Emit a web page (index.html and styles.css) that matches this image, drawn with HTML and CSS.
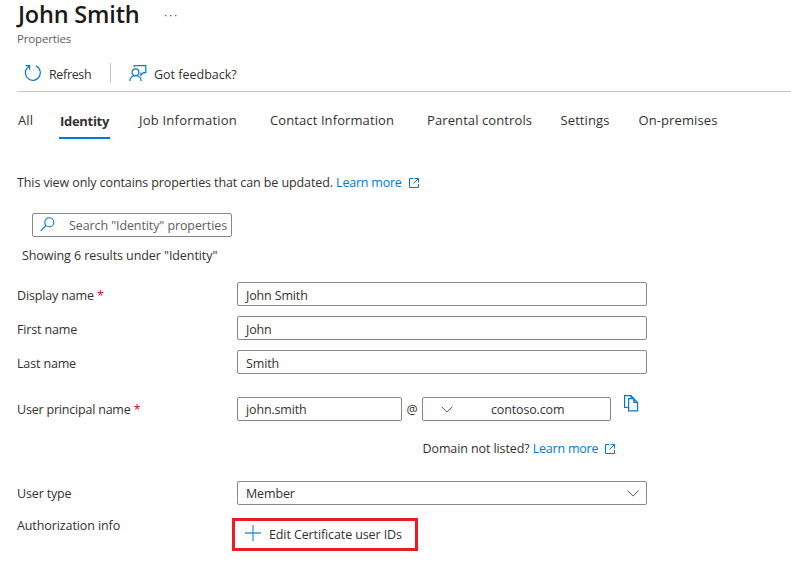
FILE: index.html
```html
<!DOCTYPE html>
<html lang="en">
<head>
<meta charset="utf-8">
<title>John Smith - Properties</title>
<link rel="stylesheet" href="styles.css">
</head>
<body>
<header class="header">
  <div class="title-row">
    <h1 class="title">John Smith</h1>
    <svg class="more" width="12" height="3" viewBox="0 0 12 3" fill="#666"><path d="M0 1h1.5v1.3H0zM5 1h1.5v1.3H5zM10 1h1.5v1.3H10z"/></svg>
  </div>
  <div class="subtitle">Properties</div>
  <div class="toolbar">
    <button class="command refresh">
      <svg width="18" height="18" viewBox="0 0 18 18" fill="none" stroke="#0078d4" stroke-width="1.2"><path d="M11.7 1.9A7.5 7.5 0 1 1 3.1 4.1L5.4 2.2M1.6 1.7h4v4"/></svg>
      <span>Refresh</span>
    </button>
    <button class="command feedback">
      <svg width="18" height="18" viewBox="0 0 18 18" fill="none" stroke="#0078d4" stroke-width="1.2"><circle cx="6.5" cy="8.2" r="3.4"/><path d="M.8 17c0-3.2 2.4-5.4 5.7-5.4s5.7 2.2 5.7 5.4M5.2 3.3V1.6h11.6v7h-2.3l-2.6 2.7V8.6"/></svg>
      <span>Got feedback?</span>
    </button>
  </div>
</header>
<nav class="tabs">
  <a class="tab all">All</a>
  <a class="tab active">Identity</a>
  <a class="tab job">Job Information</a>
  <a class="tab contact">Contact Information</a>
  <a class="tab parental">Parental controls</a>
  <a class="tab settings">Settings</a>
  <a class="tab">On-premises</a>
</nav>
<main class="content">
  <p class="intro">This view only contains properties that can be updated. <a class="link">Learn more<svg width="10" height="10" viewBox="0 0 10 10" fill="none" stroke="#0078d4"><path d="M4 .5H.5v9h9V6M5.5.5h4v4M9.5.5l-5 5"/></svg></a></p>
  <div class="search">
    <svg width="15" height="15" viewBox="0 0 15 15" fill="none" stroke="#0078d4" stroke-width="1.1"><circle cx="9.3" cy="5.3" r="4.5"/><path d="M6.1 8.5.7 13.9"/></svg>
    <span>Search "Identity" properties</span>
  </div>
  <p class="summary">Showing 6 results under "Identity"</p>
  <div class="form">
    <div class="row"><label>Display name <span class="required">*</span></label><div class="field">John Smith</div></div>
    <div class="row"><label>First name</label><div class="field">John</div></div>
    <div class="row"><label>Last name</label><div class="field">Smith</div></div>
    <div class="row principal">
      <label>User principal name <span class="required">*</span></label>
      <div class="field local">john.smith</div>
      <span class="at">@</span>
      <div class="field domain">
        <svg width="12" height="7" viewBox="0 0 12 7" fill="none" stroke="#555"><path d="M.5.6 6 6.1 11.5.6"/></svg>
        <span>contoso.com</span>
      </div>
      <svg class="copy" width="16" height="17" viewBox="0 0 16 17" fill="none" stroke="#0078d4" stroke-width="1.2"><path d="M4 12.5H.6V.6h5.2l3 3M5.8.6h1.1l2.6 2.6M4.6 3.6h5.2l3.8 3.8v8.4h-9zM9.8 3.6v3.8h3.8"/></svg>
    </div>
    <p class="hint">Domain not listed? <a class="link">Learn more<svg width="10" height="10" viewBox="0 0 10 10" fill="none" stroke="#0078d4"><path d="M4 .5H.5v9h9V6M5.5.5h4v4M9.5.5l-5 5"/></svg></a></p>
    <div class="row type">
      <label>User type</label>
      <div class="field select"><span>Member</span><svg width="12" height="7" viewBox="0 0 12 7" fill="none" stroke="#555"><path d="M.5.6 6 6.1 11.5.6"/></svg></div>
    </div>
    <div class="row authorization">
      <label>Authorization info</label>
      <button class="edit"><svg width="16" height="16" viewBox="0 0 16 16" fill="none" stroke="#3b93dc" stroke-width="1.3"><path d="M8 0v16M0 8h16"/></svg><span>Edit Certificate user IDs</span></button>
    </div>
  </div>
</main>
</body>
</html>
```
FILE: styles.css
```css
* { box-sizing: border-box; }
body {
  margin: 0;
  background: #fff;
  color: #323130;
  font: 12.5px/20px "Open Sans", "Noto Sans", sans-serif;
  letter-spacing: -.15px;
}
p, h1 { margin: 0; }
svg { display: block; flex: none; }
button { padding: 0; border: 0; background: none; color: inherit; font: inherit; letter-spacing: inherit; }
.header { height: 92px; margin-left: 17px; border-bottom: 1px solid #c8c8c8; }
.title-row { display: flex; align-items: center; height: 28px; }
.title { width: 148px; padding-left: 1px; color: #1b1a19; font-size: 23.5px; font-weight: 600; line-height: 28px; letter-spacing: -.2px; white-space: nowrap; }
.more { margin-top: 2px; }
.subtitle { color: #605e5c; font-size: 11.5px; line-height: 21px; letter-spacing: -.15px; }
.toolbar { display: flex; align-items: center; height: 34px; margin-top: 8px; }
.command { display: flex; align-items: center; white-space: nowrap; }
.refresh { width: 94px; height: 20px; padding-left: 7px; border-right: 1px solid #c8c6c4; margin-top: -2px; }
.refresh span { margin: 3px 0 0 7px; letter-spacing: -.35px; }
.feedback { margin-left: 18px; }
.command svg { margin-top: -1px; }
.feedback svg { margin-top: -3px; }
.feedback span { margin: 1px 0 0 7px; letter-spacing: 0; }
.tabs {
  display: grid;
  grid-template-columns: 42px 79px 131px 157px 133.5px 78px auto;
  height: 47px;
  padding-left: 18px;
  font-size: 13px;
  letter-spacing: .1px;
  white-space: nowrap;
}
.tab { height: 20px; margin-top: 18px; }
.tab.job { letter-spacing: .22px; }
.tab.active { justify-self: start; width: 51px; height: 29px; padding: 1px 0 0 1px; margin-left: -1px; border-bottom: 2px solid #0078d4; font-weight: 700; letter-spacing: -.3px; }
.content { padding-left: 17px; }
.intro { padding-top: 34px; letter-spacing: -.1px; }
.link { color: #0078d4; letter-spacing: -.22px; }
.link svg { display: inline-block; margin-left: 7px; vertical-align: -1px; }
.search { display: flex; align-items: center; width: 200px; height: 24px; margin: 20px 0 0 15px; padding-left: 7px; border: 1px solid #8a8886; border-radius: 2px; color: #605e5c; white-space: nowrap; }
.search svg { margin-top: -1px; }
.search span { margin: 2px 0 0 14px; letter-spacing: -.1px; }
.summary { margin: 9px 0 0 5px; letter-spacing: -.08px; }
.form { margin-top: 16px; }
.row { display: flex; height: 24px; margin-bottom: 10px; }
.row label { flex: none; width: 220px; padding-top: 4px; }
.required { color: #c50f1f; letter-spacing: 0; }
.field { width: 410px; height: 24px; padding: 3px 8px 0; border: 1px solid #8a8886; border-radius: 2px; }
.principal { margin-top: 23px; margin-bottom: 18px; }
.row.principal label { padding-top: 3px; letter-spacing: -.2px; }
.local { width: 165px; padding-top: 2px; }
.at { width: 20px; padding-top: 3px; text-align: center; }
.domain { display: flex; align-items: center; width: 189px; padding: 0 18px; }
.domain span { margin: 2px 0 0 38px; }
.copy { margin: -2px 0 0 13px; }
.hint { margin: 0 0 22px 405.5px; letter-spacing: -.1px; }
.row.type label { padding-top: 3px; }
.select { display: flex; align-items: center; justify-content: space-between; padding: 0 7px 0 8px; }
.select span { margin-top: 2px; }
.authorization { height: 33px; margin-top: 13px; margin-bottom: 0; }
.row.authorization label { margin: -2px -5px 0 0; padding-top: 0; letter-spacing: -.1px; }
.edit { display: flex; align-items: center; width: 186px; height: 33px; padding-left: 10px; border: 3px solid #ed1c24; white-space: nowrap; }
.edit span { margin-left: 8px; letter-spacing: -.11px; }
.edit svg { margin-top: -3px; }
```
